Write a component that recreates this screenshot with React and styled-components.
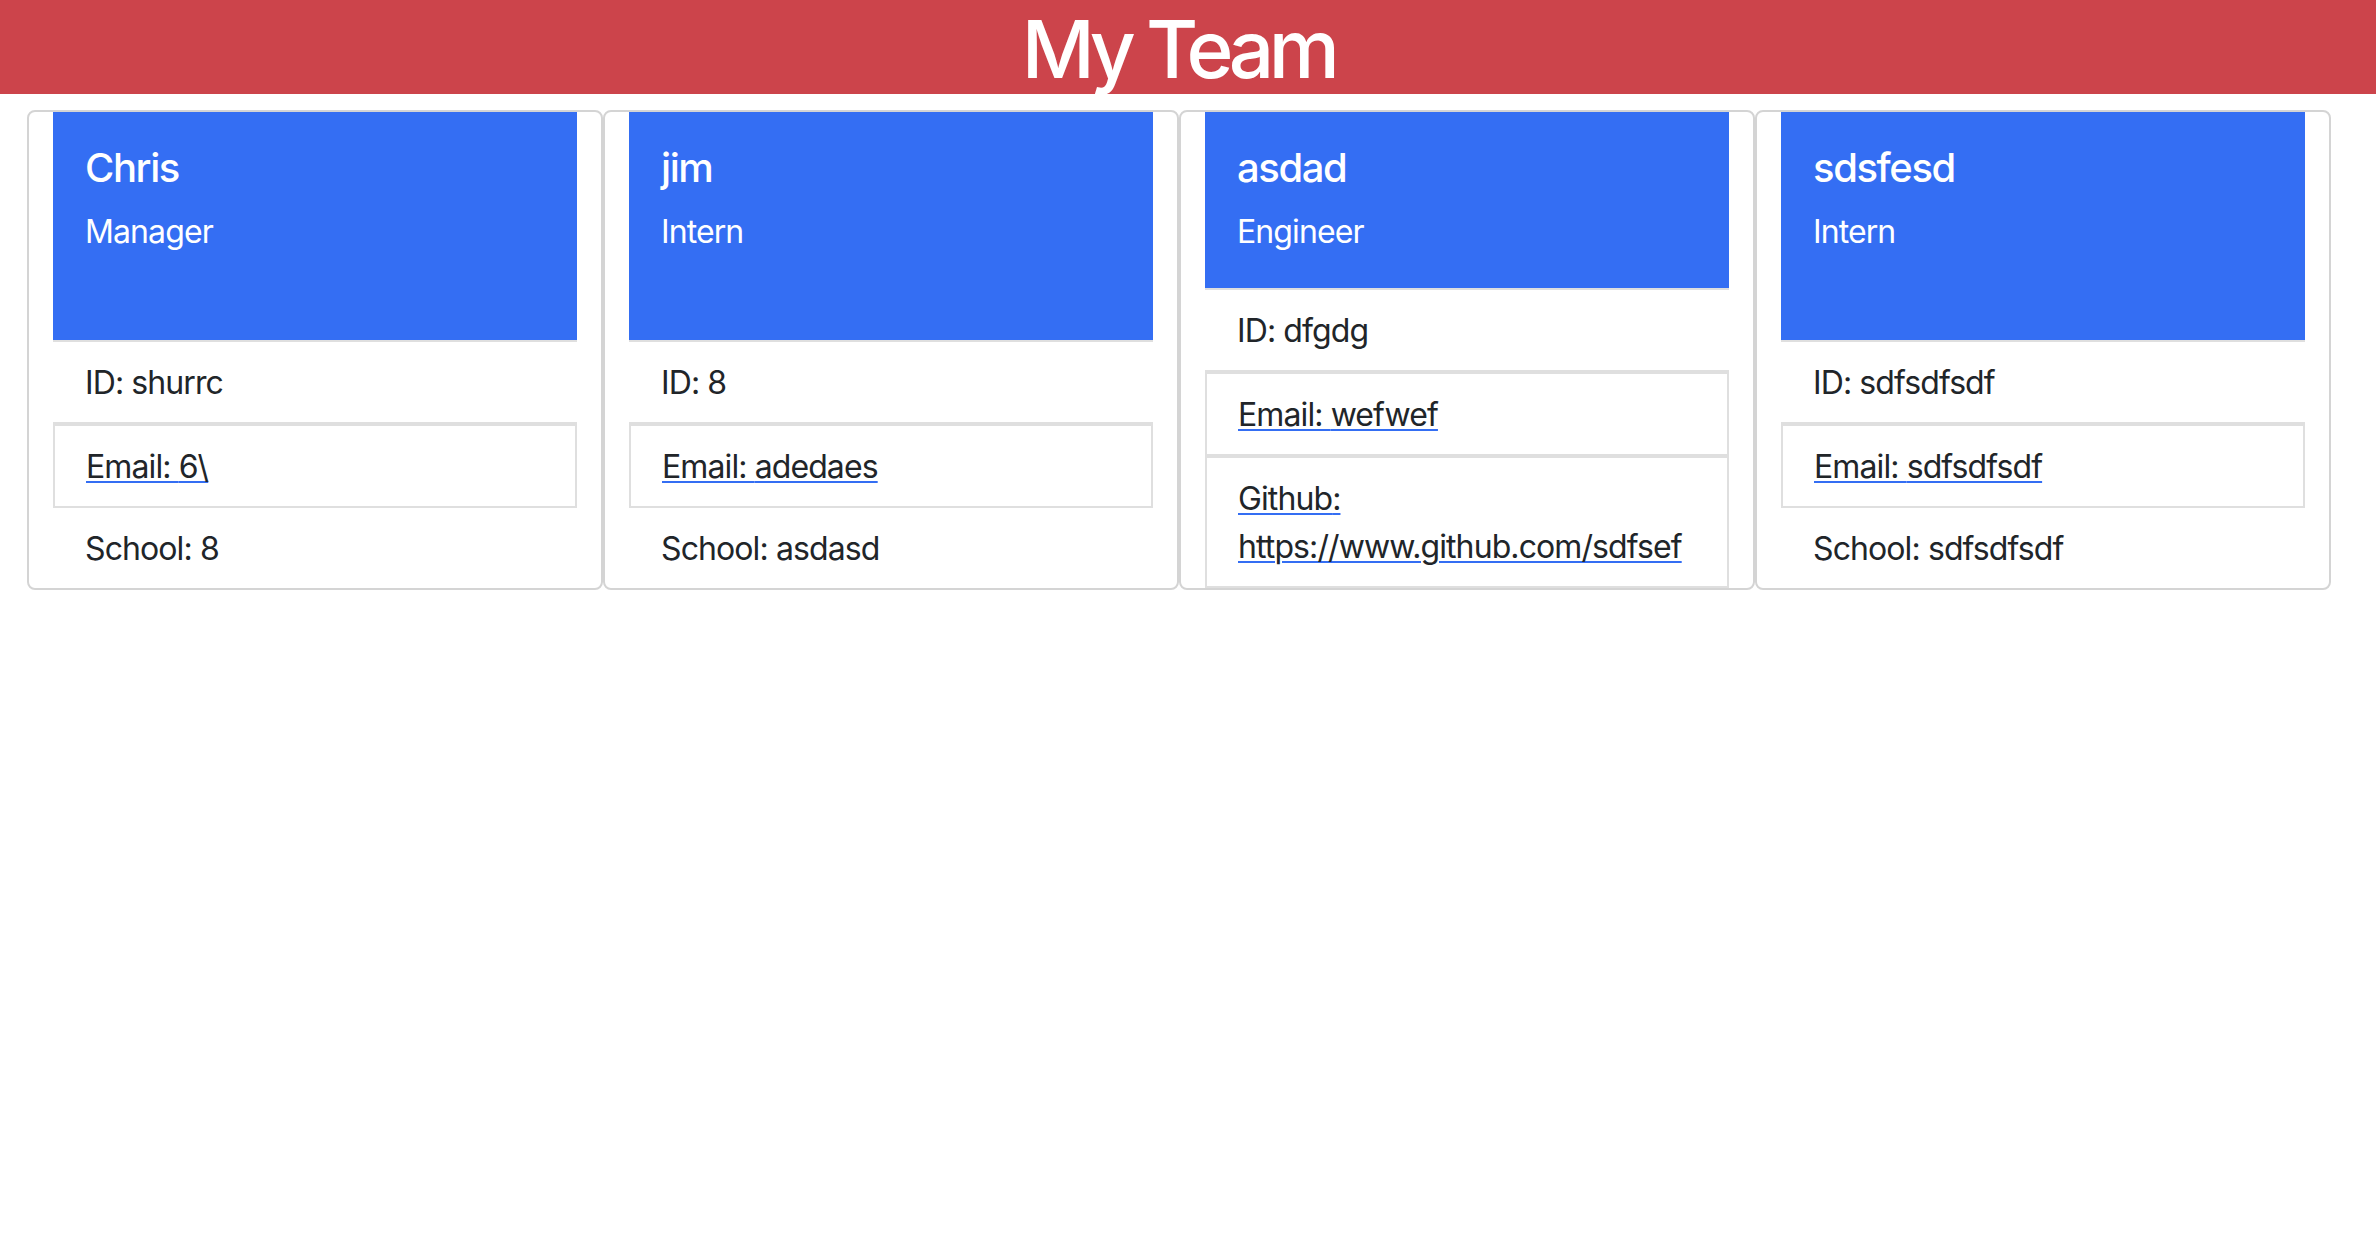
import React from 'react';
import styled, { createGlobalStyle } from 'styled-components';

const GlobalStyle = createGlobalStyle`
  html,
  body {
    margin: 0;
    padding: 0;
    background-color: #fff;
    font-family: Inter, 'Liberation Sans', Arial, sans-serif;
    color: #212529;
  }
`;

const Header = styled.header`
  display: flex;
  align-items: center;
  justify-content: center;
  height: 94px;
  padding-right: 20px;
  background-color: #cc444b;

  h1 {
    margin: 0;
    padding-top: 3px;
    font-size: 80px;
    font-weight: 500;
    line-height: 91px;
    letter-spacing: -5.5px;
    color: #fff;
  }
`;

const CardRow = styled.main`
  display: flex;
  align-items: stretch;
  padding: 16px 0 0 27px;
`;

const Card = styled.div`
  box-sizing: border-box;
  display: flex;
  flex-direction: column;
  flex-shrink: 0;
  width: 576px;
  padding: 0 24px;
  border: 2px solid #d4d4d4;
  border-radius: 8px;
  background-color: #fff;
`;

/* 이름, 직책 영역 */
const CardTop = styled.div`
  flex: 1 1 auto;
  padding: 32px;
  background-color: #346ef3;
  color: #fff;

  .name {
    margin: 0 0 16px;
    font-size: 40px;
    font-weight: 500;
    line-height: 48px;
    letter-spacing: -1.4px;
  }

  .role {
    margin: 0;
    font-size: 32px;
    font-weight: 400;
    line-height: 48px;
    letter-spacing: -0.9px;
  }
`;

/* 정보 줄 */
const InfoRow = styled.div`
  padding: 17px 32px 15px;
  font-size: 32px;
  line-height: 48px;
  letter-spacing: -0.9px;
  border-top: ${(props) => (props.$lined ? '2px solid #dfdfdf' : '0')};
  border-bottom: ${(props) => (props.$lined ? '2px solid #dfdfdf' : '0')};
`;

const LinkRow = styled.div`
  padding: 17px 31px 15px;
  font-size: 32px;
  line-height: 48px;
  letter-spacing: -0.9px;
  border: 2px solid #dfdfdf;

  a {
    color: #212529;
    text-decoration: underline;
    text-decoration-color: #346ef3;
    text-decoration-thickness: 2px;
    text-underline-offset: 3px;
  }
`;

const team = [
  { name: 'Chris', role: 'Manager', id: 'shurrc', email: '6\\', extra: { label: 'School', value: '8' } },
  { name: 'jim', role: 'Intern', id: '8', email: 'adedaes', extra: { label: 'School', value: 'asdasd' } },
  {
    name: 'asdad',
    role: 'Engineer',
    id: 'dfgdg',
    email: 'wefwef',
    extra: { label: 'Github', value: 'https://www.github.com/sdfsef', link: true },
  },
  { name: 'sdsfesd', role: 'Intern', id: 'sdfsdfsdf', email: 'sdfsdfsdf', extra: { label: 'School', value: 'sdfsdfsdf' } },
];

const EmployeeCard = ({ name, role, id, email, extra }) => {
  return (
    <Card>
      <CardTop>
        <h5 className="name">{name}</h5>
        <h6 className="role">{role}</h6>
      </CardTop>
      <InfoRow $lined>ID: {id}</InfoRow>
      <LinkRow>
        <a href={`mailto:${email}`}>Email: {email}</a>
      </LinkRow>
      {extra.link ? (
        <LinkRow>
          <a href={extra.value}>
            {extra.label}: {extra.value}
          </a>
        </LinkRow>
      ) : (
        <InfoRow>
          {extra.label}: {extra.value}
        </InfoRow>
      )}
    </Card>
  );
};

const App = () => {
  return (
    <>
      <GlobalStyle />
      <Header>
        <h1>My Team</h1>
      </Header>
      <CardRow>
        {team.map((member) => (
          <EmployeeCard key={member.name} {...member} />
        ))}
      </CardRow>
    </>
  );
};

export default App;
